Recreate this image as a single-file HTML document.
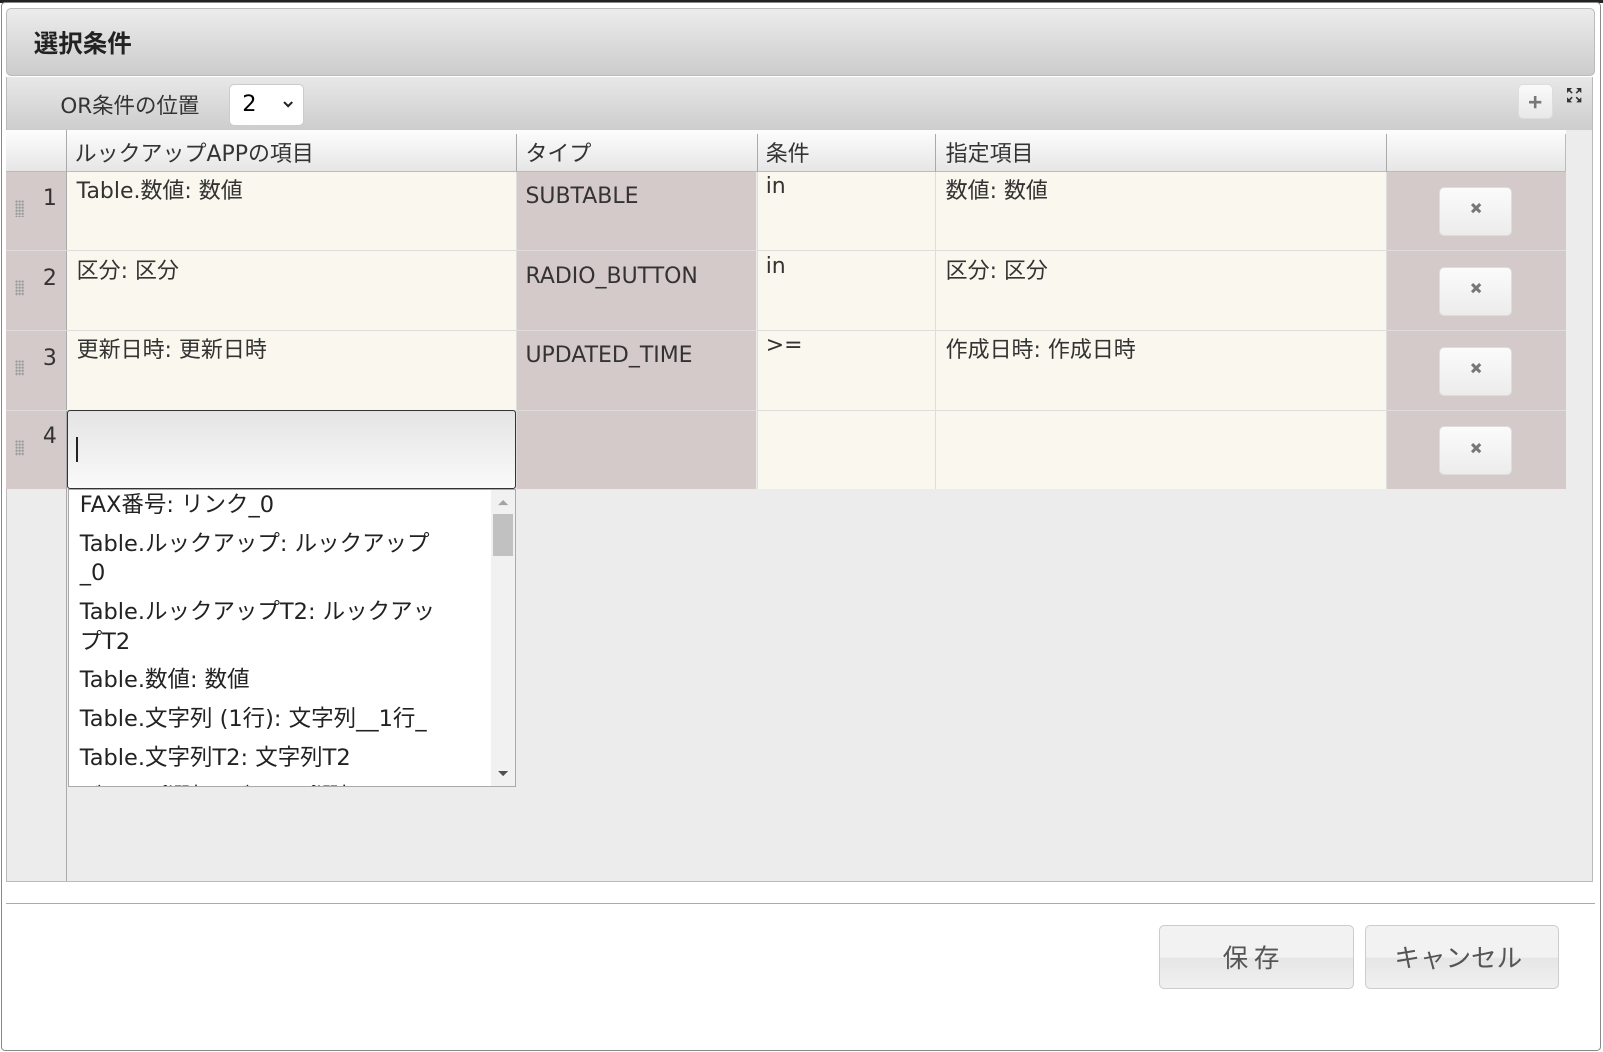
<!DOCTYPE html>
<html><head><meta charset="utf-8"><style>
html,body{margin:0;padding:0;background:#fff;overflow:hidden}
body{width:1568px;height:1029px;zoom:1.0223;position:relative;font-family:"DejaVu Sans","Noto Sans CJK JP",sans-serif;color:#333}
.a{position:absolute;box-sizing:border-box}
.t{font-size:21.5px;white-space:nowrap}
</style></head><body>
<div class="a" style="left:0;top:0;width:1568px;height:3px;background:#222"></div>
<div class="a" style="left:1px;top:2px;width:1565px;height:1026px;border:1px solid #888;border-radius:4px;background:#fff"></div>
<div class="a" style="left:6px;top:8px;width:1554px;height:66px;border:1px solid #bbb;border-radius:5px;background:linear-gradient(#ececec,#cccccc)"></div>
<div class="a t" style="left:33px;top:24px;font-size:24px;font-weight:bold;color:#222;font-family:'Noto Sans CJK JP',sans-serif">選択条件</div>
<div class="a" style="left:6px;top:75px;width:1552px;height:52px;background:linear-gradient(#e8e8e8,#cdcdcd);border-left:1px solid #bbb;border-right:1px solid #bbb"></div>
<div class="a t" style="left:59px;top:87px;font-size:21px">OR条件の位置</div>
<div class="a" style="left:224px;top:82px;width:73px;height:41px;background:#fff;border-radius:5px;border:1px solid #ccc"></div>
<div class="a t" style="left:237px;top:89px;font-size:22px;color:#000">2</div>
<svg class="a" style="left:276px;top:97px" width="12" height="10"><path d="M2 3l4 4 4-4" stroke="#222" stroke-width="2" fill="none"/></svg>
<div class="a" style="left:1485px;top:82px;width:34px;height:34px;border-radius:5px;background:linear-gradient(#fafafa,#e8e8e8);border:1px solid #ddd"></div>
<svg class="a" style="left:1494px;top:92px" width="16" height="16"><path d="M8 2v12M2 8h12" stroke="#777" stroke-width="2.5"/></svg>
<svg class="a" style="left:1532px;top:85px" width="16" height="16"><path d="M1 1h5l-5 5zM15 1h-5l5 5zM1 15h5l-5-5zM15 15h-5l5-5z" fill="#333"/><path d="M3 3l3 3M13 3l-3 3M3 13l3-3M13 13l-3-3" stroke="#333" stroke-width="1.5"/></svg>
<div class="a" style="left:6px;top:127px;width:1552px;height:736px;background:#ececec;border:1px solid #bbb;border-top:none"></div>
<div class="a" style="left:6px;top:127px;width:1526px;height:41px;background:linear-gradient(#fdfdfd,#e6e6e6);border-bottom:1px solid #bbb"></div>
<div class="a" style="left:65px;top:127px;width:1px;height:735px;background:#aaa"></div>
<div class="a" style="left:505px;top:131px;width:1px;height:37px;background:#aaa"></div>
<div class="a" style="left:740px;top:131px;width:1px;height:37px;background:#aaa"></div>
<div class="a" style="left:915px;top:131px;width:1px;height:37px;background:#aaa"></div>
<div class="a" style="left:1356px;top:131px;width:1px;height:37px;background:#aaa"></div>
<div class="a" style="left:1531px;top:131px;width:1px;height:37px;background:#bbb"></div>
<div class="a t" style="left:73px;top:134px">ルックアップAPPの項目</div>
<div class="a t" style="left:514px;top:134px">タイプ</div>
<div class="a t" style="left:749px;top:134px">条件</div>
<div class="a t" style="left:925px;top:134px">指定項目</div>
<div class="a" style="left:6px;top:168px;width:59px;height:310px;background:#d3cac9"></div>
<div class="a" style="left:66px;top:168px;width:439px;height:233px;background:#faf8ee"></div>
<div class="a" style="left:506px;top:168px;width:234px;height:310px;background:#d3cac9"></div>
<div class="a" style="left:741px;top:168px;width:174px;height:310px;background:#faf8ee"></div>
<div class="a" style="left:916px;top:168px;width:440px;height:310px;background:#faf8ee"></div>
<div class="a" style="left:1357px;top:168px;width:175px;height:310px;background:#d3cac9"></div>
<div class="a" style="left:6px;top:245px;width:1526px;height:1px;background:#ddd"></div>
<div class="a" style="left:6px;top:323px;width:1526px;height:1px;background:#ddd"></div>
<div class="a" style="left:6px;top:401px;width:1526px;height:1px;background:#ddd"></div>
<div class="a" style="left:505px;top:168px;width:1px;height:310px;background:#ddd"></div>
<div class="a" style="left:740px;top:168px;width:1px;height:310px;background:#ddd"></div>
<div class="a" style="left:915px;top:168px;width:1px;height:310px;background:#ddd"></div>
<div class="a" style="left:1356px;top:168px;width:1px;height:310px;background:#ddd"></div>

<div class="a t" style="left:42px;top:182px">1</div>
<div class="a t" style="left:42px;top:260px">2</div>
<div class="a t" style="left:42px;top:338px">3</div>
<div class="a t" style="left:42px;top:415px">4</div>
<div class="a" style="left:15px;top:196px;width:8px;height:16px;background:radial-gradient(circle,#999 1px,transparent 1.2px) 0 0/3px 3px"></div>
<div class="a" style="left:15px;top:274px;width:8px;height:16px;background:radial-gradient(circle,#999 1px,transparent 1.2px) 0 0/3px 3px"></div>
<div class="a" style="left:15px;top:352px;width:8px;height:16px;background:radial-gradient(circle,#999 1px,transparent 1.2px) 0 0/3px 3px"></div>
<div class="a" style="left:15px;top:430px;width:8px;height:16px;background:radial-gradient(circle,#999 1px,transparent 1.2px) 0 0/3px 3px"></div>

<div class="a t" style="left:75px;top:170px">Table.数値: 数値</div>
<div class="a t" style="left:514px;top:180px">SUBTABLE</div>
<div class="a t" style="left:749px;top:170px">in</div>
<div class="a t" style="left:925px;top:170px">数値: 数値</div>
<div class="a t" style="left:75px;top:248px">区分: 区分</div>
<div class="a t" style="left:514px;top:258px">RADIO_BUTTON</div>
<div class="a t" style="left:749px;top:248px">in</div>
<div class="a t" style="left:925px;top:248px">区分: 区分</div>
<div class="a t" style="left:75px;top:326px">更新日時: 更新日時</div>
<div class="a t" style="left:514px;top:336px">UPDATED_TIME</div>
<div class="a t" style="left:749px;top:326px">&gt;=</div>
<div class="a t" style="left:925px;top:326px">作成日時: 作成日時</div>

<div class="a" style="left:66px;top:401px;width:439px;height:77px;border:1px solid #333;border-radius:3px;background:linear-gradient(#e4e4e4,#fafafa)"></div>
<div class="a" style="left:74px;top:427px;width:2px;height:25px;background:#222"></div>

<div class="a" style="left:1408px;top:183px;width:71px;height:48px;border-radius:5px;background:linear-gradient(#fbfbfb,#ececec);border:1px solid #ddd"></div>
<div class="a" style="left:1408px;top:261px;width:71px;height:48px;border-radius:5px;background:linear-gradient(#fbfbfb,#ececec);border:1px solid #ddd"></div>
<div class="a" style="left:1408px;top:339px;width:71px;height:48px;border-radius:5px;background:linear-gradient(#fbfbfb,#ececec);border:1px solid #ddd"></div>
<div class="a" style="left:1408px;top:417px;width:71px;height:48px;border-radius:5px;background:linear-gradient(#fbfbfb,#ececec);border:1px solid #ddd"></div>
<svg class="a" style="left:1438px;top:198px" width="12" height="12"><path d="M2 2l8 8M10 2l-8 8" stroke="#777" stroke-width="3"/></svg>
<svg class="a" style="left:1438px;top:276px" width="12" height="12"><path d="M2 2l8 8M10 2l-8 8" stroke="#777" stroke-width="3"/></svg>
<svg class="a" style="left:1438px;top:354px" width="12" height="12"><path d="M2 2l8 8M10 2l-8 8" stroke="#777" stroke-width="3"/></svg>
<svg class="a" style="left:1438px;top:432px" width="12" height="12"><path d="M2 2l8 8M10 2l-8 8" stroke="#777" stroke-width="3"/></svg>

<div class="a" style="left:67px;top:478px;width:438px;height:292px;background:#fff;border:1px solid #aaa;overflow:hidden">
 <div style="position:absolute;left:10px;top:1px;width:400px;font-size:22px;line-height:29px;color:#222;white-space:nowrap">
  <div style="padding:0 0 9px">FAX番号: リンク_0</div>
  <div style="padding:0 0 9px">Table.ルックアップ: ルックアップ<br>_0</div>
  <div style="padding:0 0 9px">Table.ルックアップT2: ルックアッ<br>プT2</div>
  <div style="padding:0 0 9px">Table.数値: 数値</div>
  <div style="padding:0 0 9px">Table.文字列 (1行): 文字列__1行_</div>
  <div style="padding:0 0 9px">Table.文字列T2: 文字列T2</div>
  <div>グループ選択: グループ選択</div>
 </div>
 <div style="position:absolute;right:0;top:0;width:24px;height:100%;background:#f1f1f1"></div>
 <div style="position:absolute;right:2px;top:24px;width:20px;height:41px;background:#c1c1c1"></div>
 <svg style="position:absolute;right:6px;top:8px" width="12" height="8"><path d="M1 7l5-5 5 5z" fill="#a3a3a3"/></svg>
 <svg style="position:absolute;right:6px;bottom:8px" width="12" height="8"><path d="M1 1l5 5 5-5z" fill="#505050"/></svg>
</div>

<div class="a" style="left:6px;top:883px;width:1554px;height:1px;background:#aaa"></div>
<div class="a" style="left:1134px;top:905px;width:190px;height:62px;border:1px solid #ccc;border-radius:5px;background:linear-gradient(#f2f2f2 50%,#e6e6e6 52%,#f0f0f0)"></div>
<div class="a t" style="left:1196px;top:918px;font-size:25px;color:#555;font-family:'Noto Sans CJK JP',sans-serif">保 存</div>
<div class="a" style="left:1335px;top:905px;width:190px;height:62px;border:1px solid #ccc;border-radius:5px;background:linear-gradient(#f2f2f2 50%,#e6e6e6 52%,#f0f0f0)"></div>
<div class="a t" style="left:1364px;top:918px;font-size:25px;color:#555;font-family:'Noto Sans CJK JP',sans-serif">キャンセル</div>
</body></html>
